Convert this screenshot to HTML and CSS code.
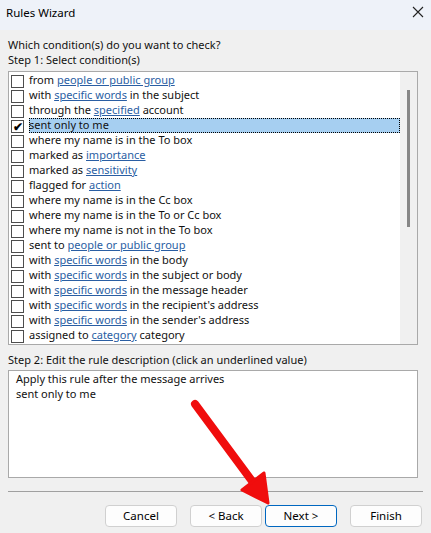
FILE: index.html
```html
<!DOCTYPE html>
<html>
	<head>
		<meta charset="UTF-8">
		<title>Rules Wizard</title>
		<link rel="stylesheet" href="styles.css">
	</head>
	<body>
		<div class="titlebar">
			<span class="title">Rules Wizard</span>
			<svg class="close" width="12" height="12" viewBox="0 0 12 12"><path d="M1 1L11 11M11 1L1 11" stroke="#222" stroke-width="1.1"/></svg>
		</div>
		<div class="dialog">
			<div class="label">Which condition(s) do you want to check?</div>
			<div class="label">Step 1: Select condition(s)</div>
			<div class="listbox">
				<div class="rows">
					<div class="row"><span class="cb"></span><span class="txt">from <u>people or public group</u></span></div>
					<div class="row"><span class="cb"></span><span class="txt">with <u>specific words</u> in the subject</span></div>
					<div class="row"><span class="cb"></span><span class="txt">through the <u>specified</u> account</span></div>
					<div class="row sel"><span class="cb on">✔</span><span class="txt">sent only to me</span></div>
					<div class="row"><span class="cb"></span><span class="txt">where my name is in the To box</span></div>
					<div class="row"><span class="cb"></span><span class="txt">marked as <u>importance</u></span></div>
					<div class="row"><span class="cb"></span><span class="txt">marked as <u>sensitivity</u></span></div>
					<div class="row"><span class="cb"></span><span class="txt">flagged for <u>action</u></span></div>
					<div class="row"><span class="cb"></span><span class="txt">where my name is in the Cc box</span></div>
					<div class="row"><span class="cb"></span><span class="txt">where my name is in the To or Cc box</span></div>
					<div class="row"><span class="cb"></span><span class="txt">where my name is not in the To box</span></div>
					<div class="row"><span class="cb"></span><span class="txt">sent to <u>people or public group</u></span></div>
					<div class="row"><span class="cb"></span><span class="txt">with <u>specific words</u> in the body</span></div>
					<div class="row"><span class="cb"></span><span class="txt">with <u>specific words</u> in the subject or body</span></div>
					<div class="row"><span class="cb"></span><span class="txt">with <u>specific words</u> in the message header</span></div>
					<div class="row"><span class="cb"></span><span class="txt">with <u>specific words</u> in the recipient's address</span></div>
					<div class="row"><span class="cb"></span><span class="txt">with <u>specific words</u> in the sender's address</span></div>
					<div class="row"><span class="cb"></span><span class="txt">assigned to <u>category</u> category</span></div>
				</div>
				<div class="scroll"><div class="thumb"></div></div>
			</div>
			<div class="label step2">Step 2: Edit the rule description (click an underlined value)</div>
			<div class="desc">
				<div>Apply this rule after the message arrives</div>
				<div>sent only to me</div>
			</div>
			<div class="sep"></div>
			<div class="buttons">
				<button class="btn">Cancel</button>
				<button class="btn back">&lt; Back</button>
				<button class="btn next">Next &gt;</button>
				<button class="btn finish">Finish</button>
			</div>
		</div>
		<svg class="arrow" width="431" height="533" viewBox="0 0 431 533">
			<line x1="195" y1="404" x2="252" y2="481" stroke="#f00d0d" stroke-width="8" stroke-linecap="round"/>
			<polygon points="264,473 242,490 268,503" fill="#f00d0d" stroke="#f00d0d" stroke-width="3" stroke-linejoin="round"/>
		</svg>
	</body>
</html>
```
FILE: styles.css
```css
* {margin: 0;padding: 0;box-sizing: border-box;}
body {width: 431px;height: 533px;overflow: hidden;background: #f0f0f0;font: 11px/15px "Noto Sans", "Open Sans", sans-serif;color: #111;position: relative;}
.titlebar {height: 30px;background: #eef2f9;display: flex;align-items: center;justify-content: space-between;padding: 0 6px 6px 6px;}
.title {font-size: 11.5px;color: #000;}
.close {margin-right: 1px;}
.dialog {padding: 7px 8px 0 8px;}
.label {height: 15px;white-space: nowrap;}
.listbox {margin-top: 4px;width: 410px;height: 274px;border: 1px solid #a9a9a9;background: #fff;display: flex;}
.rows {flex: 1;padding-top: 1px;}
.row {height: 15px;display: flex;align-items: center;white-space: nowrap;}
.cb {width: 13px;height: 13px;border: 1px solid #4d4d4d;background: #fff;margin: 1px 5px 0 2px;flex: none;font-size: 12px;line-height: 11px;text-align: center;color: #000;}
.cb.on {font-size: 12px;font-weight: bold;}
.txt {height: 15px;line-height: 14px;}
.row.sel .txt {flex: 1;background: #a6cff1;outline: 1px dotted #000;outline-offset: -1px;line-height: 14px;}
u {color: #2a5ea3;text-decoration-color: #2a5ea3;text-underline-offset: 1px;}
.scroll {width: 17px;background: #f0f0f0;flex: none;padding-top: 18px;}
.thumb {width: 3px;height: 137px;background: #868686;margin-left: 7px;}
.step2 {margin-top: 7px;}
.desc {margin-top: 3px;width: 410px;height: 108px;border: 1px solid #a9a9a9;background: #fff;padding: 0 7px;}
.sep {margin-top: 13px;width: 415px;height: 1px;background: #a0a0a0;}
.buttons {display: flex;padding: 13px 0 0 97px;}
.btn {width: 72px;height: 22px;border: 1px solid #d0d0d0;border-radius: 4px;background: #fdfdfd;font: 11.5px/20px "Noto Sans", "Open Sans", sans-serif;color: #000;}
.back {margin-left: 13px;}
.next {margin-left: 3px;border-color: #0067c0;}
.finish {margin-left: 13px;}
.arrow {position: absolute;left: 0;top: 0;pointer-events: none;}
```
